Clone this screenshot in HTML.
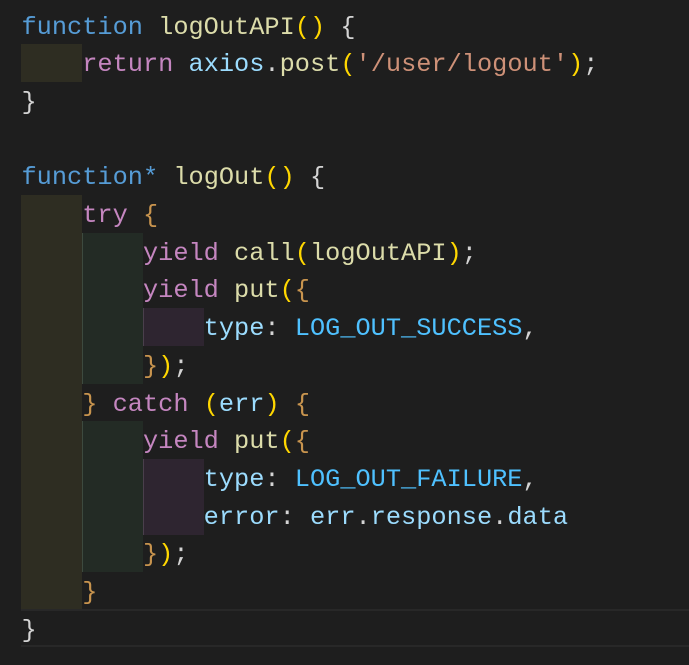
<!DOCTYPE html>
<html><head><meta charset="utf-8"><style>
html,body{margin:0;padding:0;background:#1e1e1e;width:689px;height:665px;overflow:hidden}
.b{position:absolute}
pre{position:absolute;left:21.5px;top:8.5px;margin:0;font-family:"Liberation Mono",monospace;font-size:25.3px;line-height:37.7px;color:#d4d4d4}
.k{color:#569cd6}.f{color:#dcdcaa}.c{color:#c586c0}.s{color:#ce9178}.v{color:#9cdcfe}.n{color:#4fc1ff}.g{color:#ffd700}.o{color:#c8944e}.w{color:#d4d4d4}
</style></head><body>
<div class="b" style="left:21px;top:44px;width:61px;height:38px;background:#2e2d22"></div>
<div class="b" style="left:21px;top:195px;width:61px;height:415px;background:#2e2d22"></div>
<div class="b" style="left:82px;top:233px;width:61px;height:151px;background:#232b25;box-shadow:inset 1px 0 #3d4a3f"></div>
<div class="b" style="left:82px;top:421px;width:61px;height:151px;background:#232b25;box-shadow:inset 1px 0 #3d4a3f"></div>
<div class="b" style="left:143px;top:308px;width:61px;height:38px;background:#2e2530;box-shadow:inset 1px 0 #4a3f4c"></div>
<div class="b" style="left:143px;top:459px;width:61px;height:76px;background:#2e2530;box-shadow:inset 1px 0 #4a3f4c"></div>
<div class="b" style="left:21px;top:609px;width:668px;height:34px;border-top:2px solid #282828;border-bottom:2px solid #282828"></div>
<pre><span class="k">function</span> <span class="f">logOutAPI</span><span class="g">()</span> <span class="w">{</span>
    <span class="c">return</span> <span class="v">axios</span>.<span class="f">post</span><span class="g">(</span><span class="s">'/user/logout'</span><span class="g">)</span>;
<span class="w">}</span>

<span class="k">function*</span> <span class="f">logOut</span><span class="g">()</span> <span class="w">{</span>
    <span class="c">try</span> <span class="o">{</span>
        <span class="c">yield</span> <span class="f">call</span><span class="g">(</span><span class="f">logOutAPI</span><span class="g">)</span>;
        <span class="c">yield</span> <span class="f">put</span><span class="g">(</span><span class="o">{</span>
            <span class="v">type</span>: <span class="n">LOG_OUT_SUCCESS</span>,
        <span class="o">}</span><span class="g">)</span>;
    <span class="o">}</span> <span class="c">catch</span> <span class="g">(</span><span class="v">err</span><span class="g">)</span> <span class="o">{</span>
        <span class="c">yield</span> <span class="f">put</span><span class="g">(</span><span class="o">{</span>
            <span class="v">type</span>: <span class="n">LOG_OUT_FAILURE</span>,
            <span class="v">error</span>: <span class="v">err</span>.<span class="v">response</span>.<span class="v">data</span>
        <span class="o">}</span><span class="g">)</span>;
    <span class="o">}</span>
<span class="w">}</span></pre>
</body></html>
